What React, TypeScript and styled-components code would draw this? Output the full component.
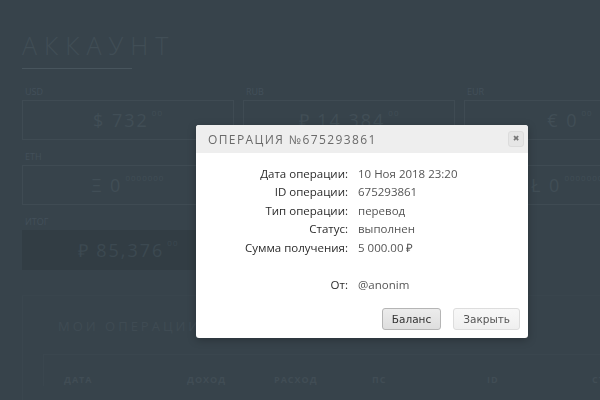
import styled, { createGlobalStyle } from "styled-components";

const GlobalStyle = createGlobalStyle`
  html, body {
    margin: 0;
    padding: 0;
    background: #37434b;
  }
  body {
    font-family: "Open Sans", "Liberation Sans", sans-serif;
    overflow: hidden;
  }
`;

const balances = [
  { code: "USD", value: "$ 732", sup: "00" },
  { code: "RUB", value: "₽ 14 384", sup: "00" },
  { code: "EUR", value: "€ 0", sup: "00" },
  { code: "ETH", value: "Ξ 0", sup: "0000000" },
  { code: "BTC", value: "Ƀ 0", sup: "00000000" },
  { code: "LTC", value: "Ł 0", sup: "00000000" },
];

const details = [
  { label: "Дата операции:", value: "10 Ноя 2018 23:20" },
  { label: "ID операции:", value: "675293861" },
  { label: "Тип операции:", value: "перевод" },
  { label: "Статус:", value: "выполнен" },
  { label: "Сумма получения:", value: "5 000.00 ₽" },
  { label: "", value: "" },
  { label: "От:", value: "@anonim" },
];

const columns = ["ДАТА", "ДОХОД", "РАСХОД", "ПС", "ID", "СТАТУС"];

export default function App() {
  return (
    <>
      <GlobalStyle />
      <Page>
        <Title>АККАУНТ</Title>
        <Underline />
        <BalanceGrid>
          {balances.map((b) => (
            <Cell key={b.code}>
              <CellLabel>{b.code}</CellLabel>
              <Box>
                {b.value}
                <Sup>{b.sup}</Sup>
              </Box>
            </Cell>
          ))}
          <Cell>
            <CellLabel>ИТОГ</CellLabel>
            <Box $filled>
              ₽ 85,376<Sup>00</Sup>
            </Box>
          </Cell>
        </BalanceGrid>
        <Operations>
          <OperationsTitle>МОИ ОПЕРАЦИИ</OperationsTitle>
          <Table>
            {columns.map((c) => (
              <HeadCell key={c}>{c}</HeadCell>
            ))}
          </Table>
        </Operations>
      </Page>

      <Modal>
        <ModalHeader>
          <ModalTitle>ОПЕРАЦИЯ №675293861</ModalTitle>
          <CloseButton>&#10006;</CloseButton>
        </ModalHeader>
        <ModalBody>
          {details.map((d, i) => (
            <DetailRow key={i}>
              <DetailLabel>{d.label}</DetailLabel>
              <DetailValue>{d.value}</DetailValue>
            </DetailRow>
          ))}
        </ModalBody>
        <ModalFooter>
          <Button $primary>Баланс</Button>
          <Button>Закрыть</Button>
        </ModalFooter>
      </Modal>
    </>
  );
}

const Page = styled.div`
  width: 600px;
  height: 400px;
  overflow: hidden;
  box-sizing: border-box;
  padding: 30px 0 0 22px;
  color: #414e56;
`;

const Title = styled.h1`
  margin: 0;
  font-size: 25px;
  line-height: 30px;
  font-weight: 300;
  letter-spacing: 7px;
  color: #414e56;
`;

const Underline = styled.div`
  width: 110px;
  height: 1px;
  margin-top: 8px;
  background: #48555d;
`;

const BalanceGrid = styled.div`
  display: grid;
  grid-template-columns: repeat(3, 212px);
  column-gap: 9px;
  row-gap: 11px;
  margin-top: 17px;
`;

const Cell = styled.div`
  display: flex;
  flex-direction: column;
`;

const CellLabel = styled.div`
  font-size: 9px;
  line-height: 12px;
  padding-left: 3px;
  margin-bottom: 2px;
  color: #43505a;
`;

const Box = styled.div<{ $filled?: boolean }>`
  height: 40px;
  box-sizing: border-box;
  display: flex;
  align-items: center;
  justify-content: center;
  font-size: 18px;
  letter-spacing: 2px;
  border: 1px solid ${(p) => (p.$filled ? "#323d44" : "#3f4b53")};
  background: ${(p) => (p.$filled ? "#323d44" : "transparent")};
  color: ${(p) => (p.$filled ? "#3c4951" : "#414e56")};
`;

const Sup = styled.span`
  font-size: 8px;
  letter-spacing: 1px;
  align-self: flex-start;
  margin-top: 6px;
  margin-left: 3px;
`;

const Operations = styled.section`
  margin-top: 25px;
  border-left: 1px solid #3a464e;
  border-top: 1px solid #39454d;
  padding: 21px 0 0 20px;
  height: 200px;
`;

const OperationsTitle = styled.h2`
  margin: 0 0 0 15px;
  font-size: 13px;
  line-height: 18px;
  font-weight: 400;
  letter-spacing: 3px;
  color: #3f4b53;
`;

const Table = styled.div`
  margin-top: 19px;
  border-left: 1px solid #3a464e;
  border-top: 1px solid #3a464e;
  padding: 18px 0 0 20px;
  display: grid;
  grid-template-columns: 123px 87px 98px 115px 105px auto;
  white-space: nowrap;
`;

const HeadCell = styled.div`
  font-size: 9px;
  font-weight: 700;
  letter-spacing: 1px;
  color: #414d55;
`;

const Modal = styled.div`
  position: fixed;
  top: 125px;
  left: 196px;
  width: 332px;
  height: 213px;
  background: #ffffff;
  border-radius: 3px;
  overflow: hidden;
  display: flex;
  flex-direction: column;
  box-shadow: 0 2px 8px rgba(0, 0, 0, 0.25);
`;

const ModalHeader = styled.div`
  height: 28px;
  background: #eeeeee;
  display: flex;
  align-items: center;
  justify-content: space-between;
  padding: 0 4px 0 12px;
`;

const ModalTitle = styled.div`
  font-size: 12px;
  letter-spacing: 1.4px;
  color: #6a6a6a;
`;

const CloseButton = styled.button`
  width: 16px;
  height: 16px;
  padding: 0;
  border: 1px solid #dcdcdc;
  border-radius: 3px;
  background: #e6e6e6;
  color: #777;
  font-size: 8px;
  line-height: 14px;
  font-family: "DejaVu Sans", sans-serif;
`;

const ModalBody = styled.div`
  flex: 1;
  padding-top: 11px;
`;

const DetailRow = styled.div`
  display: grid;
  grid-template-columns: 152px auto;
  column-gap: 10px;
  height: 18.5px;
  align-items: center;
  font-size: 11.5px;
`;

const DetailLabel = styled.div`
  text-align: right;
  color: #2b2b2b;
  font-weight: 500;
`;

const DetailValue = styled.div`
  color: #555;
`;

const ModalFooter = styled.div`
  display: flex;
  justify-content: flex-end;
  gap: 12px;
  padding: 0 8px 8px 0;
`;

const Button = styled.button<{ $primary?: boolean }>`
  height: 22px;
  padding: 0 9px;
  font-family: "DejaVu Sans", Verdana, sans-serif;
  font-size: 10.5px;
  border-radius: 3px;
  border: 1px solid ${(p) => (p.$primary ? "#b5b5b5" : "#dddddd")};
  background: ${(p) =>
    p.$primary
      ? "linear-gradient(#ececec, #dedede)"
      : "linear-gradient(#f8f8f8, #efefef)"};
  color: ${(p) => (p.$primary ? "#333" : "#555")};
`;
